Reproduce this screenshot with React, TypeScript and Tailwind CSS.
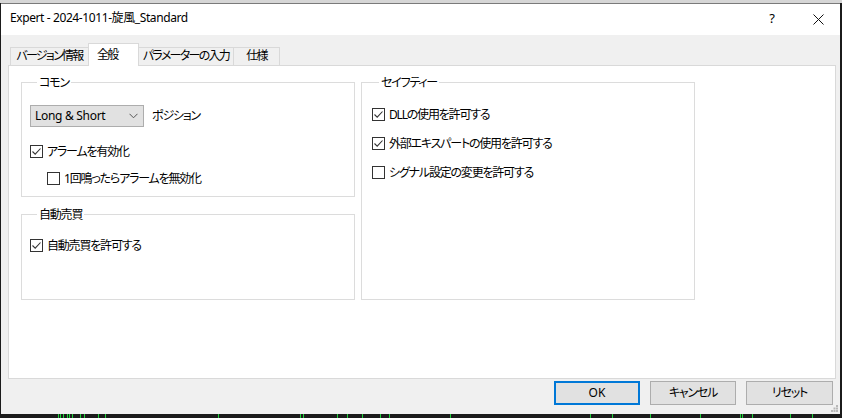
import React from "react";

const ff = "font-['Noto_Sans','Noto_Sans_CJK_JP',sans-serif] [font-feature-settings:'palt'] text-[12px] text-black";
const ja = "tracking-[-1.2px]";
const tab = "tracking-[-1.7px]";

function Check({ checked, label }: { checked?: boolean; label: string }) {
	return (
		<div className="flex h-[20px] items-center gap-[4px]">
			<span className="flex h-[13px] w-[13px] items-center justify-center border border-[#333333] bg-white">
				{checked && (
					<svg width="11" height="11" viewBox="0 0 11 11">
						<path d="M1.5 5.5 L4.2 8.2 L9.5 2.5" fill="none" stroke="#333" strokeWidth="1.1" />
					</svg>
				)}
			</span>
			<span className={"leading-none " + ja}>{label}</span>
		</div>
	);
}

function Group({ title, className, children }: { title: string; className: string; children: React.ReactNode }) {
	return (
		<fieldset className={"border border-[#dcdcdc] " + className}>
			<legend className={"ml-[7px] px-[2px] leading-[16px] " + ja}>{title}</legend>
			{children}
		</fieldset>
	);
}

export default function App() {
	return (
		<div className={"flex h-[418px] w-[842px] flex-col overflow-hidden bg-[#1b1b1b] " + ff}>
			<div className="h-[3px] bg-[#d6d6d6]" />
			<div className="ml-[1px] flex h-[411px] w-[839px] flex-col border-t border-[#7a7a7a] bg-[#f0f0f0]">
				{/* title bar */}
				<div className="flex h-[31px] items-center bg-white pl-[9px]">
					<span className="flex-1 pb-[2px] tracking-[-0.4px]">Expert - 2024-1011-旋風_Standard</span>
					<span className="mr-[38px] pb-[2px] text-[13px]">?</span>
					<svg className="mr-[16px]" width="11" height="11" viewBox="0 0 11 11">
						<path d="M0.5 0.5 L10.5 10.5 M10.5 0.5 L0.5 10.5" stroke="#111" strokeWidth="1" />
					</svg>
				</div>
				{/* tabs */}
				<div className={"mt-[8px] flex h-[22px] items-end pl-[9px] " + tab}>
					<div className="flex h-[18px] w-[78px] items-center justify-center border border-r-0 border-b-0 border-[#d9d9d9]">バージョン情報</div>
					<div className="relative z-10 -mb-px flex h-[23px] w-[51px] items-start border border-b-0 border-[#d9d9d9] bg-white pl-[8px] pt-[2px]">全般</div>
					<div className="flex h-[18px] w-[95px] items-center justify-center border border-l-0 border-b-0 border-[#d9d9d9]">パラメーターの入力</div>
					<div className="flex h-[18px] w-[46px] items-center justify-center border border-l-0 border-b-0 border-[#d9d9d9]">仕様</div>
				</div>
				{/* panel */}
				<div className="ml-[7px] flex h-[316px] w-[828px] gap-[6px] border border-[#d9d9d9] bg-white pl-[12px] pt-[9px]">
					<div className="flex w-[334px] flex-col gap-[10px]">
						<Group title="コモン" className="h-[122px] px-[8px]">
							<div className="mt-[14px] flex items-center gap-[8px]">
								<div className="flex h-[22px] w-[114px] items-center justify-between border border-[#adadad] bg-[#e1e1e1] pl-[4px] pr-[5px]">
									<span className="tracking-[-0.3px]">Long &amp; Short</span>
									<svg width="9" height="6" viewBox="0 0 9 6">
										<path d="M0.5 0.8 L4.5 4.8 L8.5 0.8" fill="none" stroke="#555" strokeWidth="1" />
									</svg>
								</div>
								<span className={ja}>ポジション</span>
							</div>
							<div className="mt-[15px]">
								<Check checked label="アラームを有効化" />
							</div>
							<div className="mt-[7px] pl-[17px]">
								<Check label="1回鳴ったらアラームを無効化" />
							</div>
						</Group>
						<Group title="自動売買" className="h-[93px] px-[8px]">
							<div className="mt-[13px]">
								<Check checked label="自動売買を許可する" />
							</div>
						</Group>
					</div>
					<Group title="セイフティー" className="h-[225px] w-[334px] px-[10px]">
						<div className="mt-[14px] flex flex-col gap-[9px]">
							<Check checked label="DLLの使用を許可する" />
							<Check checked label="外部エキスパートの使用を許可する" />
							<Check label="シグナル設定の変更を許可する" />
						</div>
					</Group>
				</div>
				{/* buttons */}
				<div className="mt-[2px] flex items-start justify-end gap-[10px] pr-[7px]">
					<button className="h-[24px] w-[86px] border-2 border-[#0078d7] bg-[#e1e1e1]">OK</button>
					<button className={"h-[24px] w-[86px] border border-[#adadad] bg-[#e1e1e1] " + ja}>キャンセル</button>
					<button className={"h-[24px] w-[87px] border border-[#adadad] bg-[#e1e1e1] " + ja}>リセット</button>
				</div>
				<div className="flex flex-1 items-end justify-end pb-[2px] pr-[2px]">
					<svg width="7" height="7" viewBox="0 0 7 7">
						<rect x="5" y="0" width="2" height="2" fill="#b8b8b8" />
						<rect x="2.5" y="2.5" width="2" height="2" fill="#b8b8b8" />
						<rect x="5" y="2.5" width="2" height="2" fill="#b8b8b8" />
						<rect x="0" y="5" width="2" height="2" fill="#b8b8b8" />
						<rect x="2.5" y="5" width="2" height="2" fill="#b8b8b8" />
						<rect x="5" y="5" width="2" height="2" fill="#b8b8b8" />
					</svg>
				</div>
			</div>
			<svg className="h-[4px] w-[842px]" viewBox="0 0 842 4">
				{[58, 60, 63, 67, 69, 72, 80, 84, 98, 105, 218, 300, 303, 337, 347, 362, 380, 389, 450, 590, 612, 650, 700, 740, 742, 752, 790, 812].map((x) => (
					<rect key={x} x={x} y="0" width="1" height="4" fill="#1fcf3a" />
				))}
			</svg>
		</div>
	);
}
